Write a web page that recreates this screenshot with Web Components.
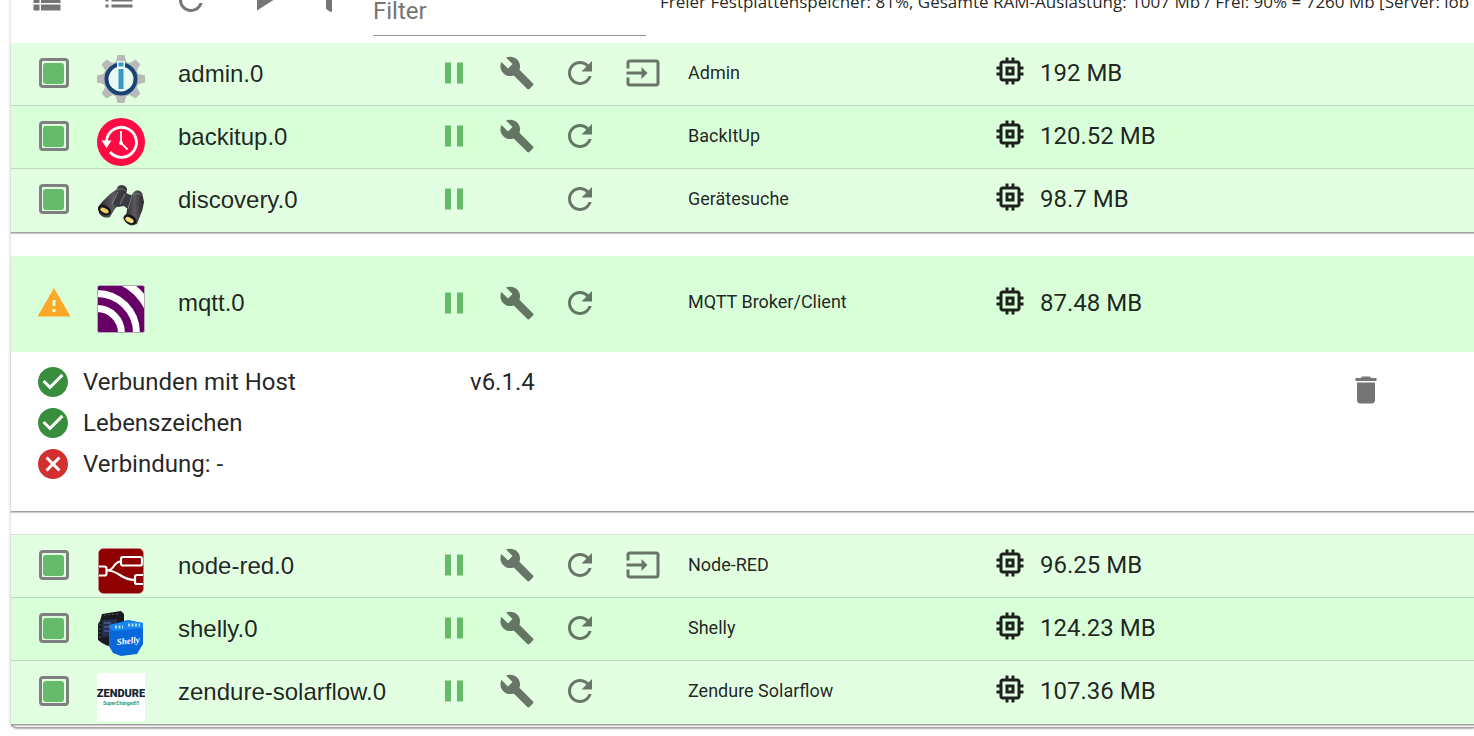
<!DOCTYPE html>
<html lang="de">
<head>
<meta charset="utf-8">
<title>Instanzen</title>
<style>
  body {
    display: flow-root;
    min-height: 100vh;
    margin: 0;
    overflow: hidden;
    background: #fff;
    color: rgba(0, 0, 0, 0.87);
    font-family: Roboto, "Liberation Sans", sans-serif;
    font-size: 24px;
    line-height: 36px;
  }
</style>
</head>
<body>
<instances-panel>
  <instances-toolbar slot="toolbar">Freier Festplattenspeicher: 81%, Gesamte RAM-Auslastung: 1007 Mb / Frei: 90% = 7260 Mb [Server: iob</instances-toolbar>

  <instance-group>
    <instance-row name="admin.0" logo="admin" memory="192 MB" actions="settings restart open">Admin</instance-row>
    <instance-row name="backitup.0" logo="backitup" memory="120.52 MB" actions="settings restart" shade>BackItUp</instance-row>
    <instance-row name="discovery.0" logo="discovery" memory="98.7 MB" actions="restart">Gerätesuche</instance-row>
  </instance-group>

  <instance-group>
    <instance-row name="mqtt.0" logo="mqtt" memory="87.48 MB" actions="settings restart" status="warning" shade expanded>MQTT Broker/Client</instance-row>
    <instance-details version="v6.1.4">
      <state-line state="ok">Verbunden mit Host</state-line>
      <state-line state="ok">Lebenszeichen</state-line>
      <state-line state="error">Verbindung: -</state-line>
    </instance-details>
  </instance-group>

  <instance-group divided>
    <instance-row name="node-red.0" logo="nodered" memory="96.25 MB" actions="settings restart open">Node-RED</instance-row>
    <instance-row name="shelly.0" logo="shelly" memory="124.23 MB" actions="settings restart" shade>Shelly</instance-row>
    <instance-row name="zendure-solarflow.0" logo="zendure" memory="107.36 MB" actions="settings restart">Zendure Solarflow</instance-row>
  </instance-group>
</instances-panel>

<script>
const ICONS = {
  viewList: 'M3 14h4v-4H3v4zm0 5h4v-4H3v4zM3 9h4V5H3v4zm5 5h13v-4H8v4zm0 5h13v-4H8v4zM8 5v4h13V5H8z',
  list: 'M3 13h2v-2H3v2zm0 4h2v-2H3v2zm0-8h2V7H3v2zm4 4h14v-2H7v2zm0 4h14v-2H7v2zM7 7v2h14V7H7z',
  restart: 'M17.65 6.35C16.2 4.9 14.21 4 12 4c-4.42 0-7.99 3.58-7.99 8s3.57 8 7.99 8c3.73 0 6.84-2.55 7.73-6h-2.08c-.82 2.33-3.04 4-5.65 4-3.31 0-6-2.69-6-6s2.69-6 6-6c1.66 0 3.14.69 4.22 1.78L13 11h7V4l-2.35 2.35z',
  play: 'M8 5v14l11-7z',
  pause: 'M6 19h4V5H6v14zm8-14v14h4V5h-4z',
  settings: 'M22.7 19l-9.1-9.1c.9-2.3.4-5-1.5-6.9-2-2-5-2.4-7.4-1.3L9 6 6 9 1.6 4.7C.4 7.1.9 10.1 2.9 12.1c1.9 1.9 4.6 2.4 6.9 1.5l9.1 9.1c.4.4 1 .4 1.4 0l2.3-2.3c.5-.4.5-1.1.1-1.4z',
  open: 'M21 3.01H3c-1.1 0-2 .9-2 2V9h2V4.99h18v14.03H3V15H1v4.01c0 1.1.9 1.98 2 1.98h18c1.1 0 2-.88 2-1.98v-14c0-1.11-.9-2-2-2zM11 16l4-4-4-4v3H1v2h10v3z',
  memory: 'M15 9H9v6h6V9zm-2 4h-2v-2h2v2zm8-2V9h-2V7c0-1.1-.9-2-2-2h-2V3h-2v2h-2V3H9v2H7c-1.1 0-2 .9-2 2v2H3v2h2v2H3v2h2v2c0 1.1.9 2 2 2h2v2h2v-2h2v2h2v-2h2c1.1 0 2-.9 2-2v-2h2v-2h-2v-2h2zm-4 6H7V7h10v10z',
  warning: 'M1 21h22L12 2 1 21zm12-3h-2v-2h2v2zm0-4h-2v-4h2v4z',
  ok: 'M12 2C6.48 2 2 6.48 2 12s4.48 10 10 10 10-4.48 10-10S17.52 2 12 2zm-2 15l-5-5 1.41-1.41L10 14.17l7.59-7.59L19 8l-9 9z',
  error: 'M12 2C6.47 2 2 6.47 2 12s4.47 10 10 10 10-4.47 10-10S17.53 2 12 2zm5 13.59L15.59 17 12 13.41 8.41 17 7 15.59 10.59 12 7 8.41 8.41 7 12 10.59 15.59 7 17 8.41 13.41 12 17 15.59z',
  remove: 'M6 19c0 1.1.9 2 2 2h8c1.1 0 2-.9 2-2V7H6v12zM19 4h-3.5l-1-1h-5l-1 1H5v2h14V4z'
};

const LOGOS = {
  admin: `
    <g fill="#b9b9b9">
      <circle cx="24" cy="24" r="18"/>
      ${[0, 45, 90, 135, 180, 225, 270, 315].map(a => `<path d="M20.500 0h7l2 8h-11z" transform="rotate(${a} 24 24)"/>`).join('')}
    </g>
    <circle cx="24" cy="24" r="14.500" fill="#e9fbf0" stroke="#174475" stroke-width="4"/>
    <path d="M20 6h8v8h-8z" fill="#e9fbf0"/>
    <path d="M21.500 7.500h5v4h-5zM21.500 14h5v20h-5z" fill="#3399cc"/>`,
  backitup: `
    <circle cx="24" cy="24" r="24" fill="#ff0a42"/>
    <path d="M9.500 23A15 15 0 1 1 13 34" fill="none" stroke="#fff" stroke-width="2.800"/>
    <path d="M4.500 22.500h10l-5 7.500z" fill="#fff"/>
    <path d="M24 13v12l6.500 6.500" fill="none" stroke="#fff" stroke-width="1.800"/>
    <circle cx="24" cy="25" r="2" fill="#fff"/>`,
  discovery: `
    <defs>
      <linearGradient id="body" x1="0" x2="1"><stop stop-color="#2a282c"/><stop offset=".5" stop-color="#5c5a60"/><stop offset="1" stop-color="#2a282c"/></linearGradient>
    </defs>
    <g transform="translate(0 1)">
      <path d="M20 7q0-4 5-4 5 1 5 5l-3 12-6 4q-3 2-5 6l-3 5Q6 37 2 31q-2-6 3-11l8-8z" fill="url(#body)"/>
      <path d="M36 11q3-4 7-2 3 2 3 6l1 5q-1 8-4 14l-3 8q-7 4-12-3l2-11 1-9z" fill="url(#body)"/>
      <path d="M20 9l9 2 7 3-4 14-5-4-6 1-5-3z" fill="#3c3b41"/>
      <path d="M21 10l-6 12M35 14l-4 13M28 12l-5 10" stroke="#85838a" fill="none"/>
      <path d="M20 8q5-3 9 1M36 13q5-3 10 1" stroke="#77767e" fill="none"/>
      <ellipse cx="7.500" cy="28" rx="7" ry="4.500" transform="rotate(28 7.500 28)" fill="#171519"/>
      <ellipse cx="7.500" cy="28.500" rx="4.500" ry="2.200" transform="rotate(28 7.500 28.500)" fill="#f0cf62"/>
      <ellipse cx="33" cy="37.500" rx="7" ry="4.500" transform="rotate(28 33 37.500)" fill="#171519"/>
      <ellipse cx="32.500" cy="38" rx="4.500" ry="2.400" transform="rotate(28 32.500 38)" fill="#f5dc83"/>
    </g>`,
  mqtt: `
    <clipPath id="tile"><rect x=".5" y=".5" width="47" height="47" rx="2"/></clipPath>
    <g clip-path="url(#tile)">
      <rect width="48" height="48" fill="#606"/>
      <g fill="none" stroke="#fff" stroke-width="7">
        <circle cx="0" cy="48" r="24.500"/>
        <circle cx="0" cy="48" r="39.500"/>
        <path d="M24-4Q42 4 52 24" stroke-width="8"/>
      </g>
    </g>
    <rect x=".5" y=".5" width="47" height="47" rx="2" fill="none" stroke="#b8a9b8"/>`,
  nodered: `
    <rect x="1.500" y="1.500" width="45" height="45" rx="5" fill="#8f0000" stroke="#c98888" stroke-width=".5"/>
    <g fill="none" stroke="#fff" stroke-width="2.200">
      <rect x="24" y="10" width="21" height="8.500" rx="2"/>
      <path d="M2 19.500h5.500q2 0 2 2v5q0 2-2 2H2M46 28h-6q-2 0-2 2v5q0 2 2 2h6"/>
      <path d="M10 23.500c8 0 6-9 14-9M10 23.500c13 0 13 9.500 28 9.500"/>
    </g>`,
  shelly: `
    <path d="M5 4L24 1l3 3v9l-3 19-13 4-6-3-4-3V14l2-3z" fill="#171b20"/>
    <path d="M5 10l15-1v16L5 27z" fill="#26304a"/>
    <path d="M7 5l16-1M3 14v14" stroke="#555b62" stroke-dasharray="2 2"/>
    <path d="M7 13h7M7 17h7M7 21h7" stroke="#5776b5"/>
    <path d="M12 15l19-5 15 3v21l-6 10-16 2-8-3-4-7z" fill="#0768dc"/>
    <path d="M12 15l19-4 15 2v5l-29 3-5-3z" fill="#1986ee"/>
    <path d="M18 17h8M31 15h12" stroke="#a8dcf5" stroke-width="3" stroke-dasharray="2 1.500"/>
    <text x="20" y="35" font-family="Liberation Serif, serif" font-size="9" font-style="italic" font-weight="700" fill="#fff" transform="rotate(-6 20 35)">Shelly</text>`,
  zendure: `
    <rect width="48" height="48" fill="#fff"/>
    <text x="24" y="24" text-anchor="middle" font-family="Roboto, sans-serif" font-size="11" font-weight="900" fill="#12222e">ZENDURE</text>
    <text x="24" y="32" text-anchor="middle" font-family="Roboto, sans-serif" font-size="5" font-weight="700" fill="#18a183">SuperCharged!!!</text>`
};

const LABELS = {
  settings: 'Einstellungen',
  restart: 'Neu starten',
  open: 'Instanz öffnen'
};

class MdIcon extends HTMLElement {
  constructor() {
    super();
    this.attachShadow({ mode: 'open' });
  }

  connectedCallback() {
    this.shadowRoot.innerHTML = `
      <style>
        :host { display: block; flex: none; width: 36px; height: 36px; }
        svg { display: block; width: 100%; height: 100%; fill: currentColor; }
      </style>
      <svg viewBox="0 0 24 24" aria-hidden="true"><path d="${ICONS[this.getAttribute('name')]}"/></svg>
    `;
  }
}

class AdapterLogo extends HTMLElement {
  constructor() {
    super();
    this.attachShadow({ mode: 'open' });
  }

  connectedCallback() {
    this.shadowRoot.innerHTML = `
      <style>
        :host { display: block; width: 48px; height: 48px; }
        svg { display: block; }
      </style>
      <svg width="48" height="48" viewBox="0 0 48 48" aria-hidden="true">${LOGOS[this.getAttribute('name')]}</svg>
    `;
  }
}

class InstancesPanel extends HTMLElement {
  constructor() {
    super();
    this.attachShadow({ mode: 'open' });
    // The panel sits half a toolbar above the window, as if scrolled
    this.shadowRoot.innerHTML = `
      <style>
        :host {
          display: block;
          margin: -43px 0 0 11px;
          padding-bottom: 3px;
          background: #fff;
          border-radius: 6px 0 0 6px;
          box-shadow: 0 1px 0 #a6a6a6, 0 2px 1px rgba(0, 0, 0, 0.2), 0 1px 4px rgba(0, 0, 0, 0.2);
        }
        .groups { display: flex; flex-direction: column; gap: 24px; }
      </style>
      <slot name="toolbar"></slot>
      <div class="groups"><slot></slot></div>
    `;
  }
}

class InstancesToolbar extends HTMLElement {
  constructor() {
    super();
    this.attachShadow({ mode: 'open' });
    this.shadowRoot.innerHTML = `
      <style>
        :host { display: flex; align-items: center; height: 86px; overflow: hidden; }
        button {
          display: flex;
          flex: none;
          align-items: center;
          justify-content: center;
          width: 72px;
          height: 54px;
          padding: 0;
          border: 0;
          background: none;
          color: #757575;
        }
        button.filter { width: 60px; }
        .filter svg { width: 24px; height: 24px; fill: currentColor; }
        input {
          flex: none;
          align-self: flex-end;
          box-sizing: border-box;
          width: 273px;
          height: 50px;
          margin: 0 14px 7px;
          padding: 0;
          border: 0;
          border-bottom: 1px solid #949494;
          background: none;
          outline: 0;
          font: inherit;
        }
        input::placeholder { color: #757575; opacity: 1; }
        .info {
          padding-top: 3px;
          font-family: "Open Sans", "Noto Sans", sans-serif;
          font-size: 17px;
          line-height: 24px;
          white-space: nowrap;
        }
      </style>
      <button aria-label="Tabelle"><md-icon name="viewList"></md-icon></button>
      <button aria-label="Liste"><md-icon name="list"></md-icon></button>
      <button aria-label="Aktualisieren"><md-icon name="restart"></md-icon></button>
      <button aria-label="Nur laufende"><md-icon name="play"></md-icon></button>
      <button class="filter" aria-label="Filtern">
        <svg viewBox="0 0 512 512"><path d="M487.976 0H24.028C2.710 0-8.047 25.866 7.058 40.971L192 225.941V432c0 7.831 3.821 15.170 10.237 19.662l80 55.980C298.020 518.690 320 507.493 320 487.980V225.941l184.947-184.970C520.021 25.896 509.338 0 487.976 0z"/></svg>
      </button>
      <input type="text" placeholder="Filter" aria-label="Filter">
      <div class="info"><slot></slot></div>
    `;
  }
}

class InstanceGroup extends HTMLElement {
  constructor() {
    super();
    this.attachShadow({ mode: 'open' });
    this.shadowRoot.innerHTML = `
      <style>
        :host {
          display: block;
          background: #fff;
          box-shadow: 0 1px 0 #a0a0a0, 0 2px 1px rgba(0, 0, 0, 0.2);
        }
        ::slotted(instance-row:not(:first-child)),
        :host([divided]) ::slotted(instance-row) {
          box-shadow: 0 -1px 0 #bdd9bd;
        }
        :host([divided]) ::slotted(instance-row:first-child) {
          box-shadow: 0 -1px 0 #dcdcdc;
        }
      </style>
      <slot></slot>
    `;
  }
}

class InstanceRow extends HTMLElement {
  constructor() {
    super();
    this.attachShadow({ mode: 'open' });
  }

  connectedCallback() {
    const name = this.getAttribute('name');
    const actions = this.getAttribute('actions').split(' ');
    const warning = this.getAttribute('status') === 'warning';

    this.shadowRoot.innerHTML = `
      <style>
        :host {
          display: grid;
          grid-template-columns: 58px 81px 249px 261px 304px 1fr;
          align-items: center;
          box-sizing: border-box;
          height: 63px;
          padding: 0 0 4px 28px;
          background: #e3ffe2;
        }
        :host([shade]) { background: #d8ffd8; }
        :host([expanded]) { height: 96px; padding-bottom: 2px; }
        .state {
          display: block;
          appearance: none;
          box-sizing: border-box;
          width: 30px;
          height: 30px;
          margin: 0;
          padding: 2px 1px;
          border: 3px solid #808080;
          border-radius: 4px;
        }
        .state::before {
          content: "";
          display: block;
          width: 21px;
          height: 21px;
          border-radius: 3px;
          background: #66bb6a;
        }
        .warning { margin-left: -3px; color: #ffa726; }
        adapter-logo { margin-top: 12px; }
        .name { padding-top: 2px; font-family: "Liberation Sans", Arial, sans-serif; white-space: nowrap; }
        .actions { display: grid; grid-template-columns: repeat(4, 54px); gap: 9px; }
        button {
          display: flex;
          align-items: center;
          justify-content: center;
          height: 54px;
          padding: 0;
          border: 0;
          background: none;
          color: rgba(0, 0, 0, 0.54);
        }
        .pause { grid-column: 1; color: #66bb6a; }
        .settings { grid-column: 2; }
        .restart { grid-column: 3; }
        .open { grid-column: 4; }
        .title { padding-bottom: 2px; font-size: 18px; line-height: 27px; }
        :host([expanded]) .name { padding-top: 0; }
        :host([expanded]) .title { padding-bottom: 4px; }
        .memory { display: flex; align-items: center; gap: 12px; white-space: nowrap; }
        .memory md-icon { margin-bottom: 4px; }
      </style>
      ${warning
        ? '<md-icon class="warning" name="warning"></md-icon>'
        : `<input class="state" type="checkbox" checked aria-label="${name} aktiv">`}
      <adapter-logo name="${this.getAttribute('logo')}"></adapter-logo>
      <div class="name">${name}</div>
      <div class="actions">
        <button class="pause" aria-label="Anhalten"><md-icon name="pause"></md-icon></button>
        ${actions.map(a => `<button class="${a}" aria-label="${LABELS[a]}"><md-icon name="${a}"></md-icon></button>`).join('')}
      </div>
      <div class="title"><slot></slot></div>
      <div class="memory"><md-icon name="memory"></md-icon><span>${this.getAttribute('memory')}</span></div>
    `;
  }
}

class InstanceDetails extends HTMLElement {
  constructor() {
    super();
    this.attachShadow({ mode: 'open' });
  }

  connectedCallback() {
    this.shadowRoot.innerHTML = `
      <style>
        :host {
          display: grid;
          grid-template-columns: 435px 1fr auto;
          align-items: start;
          padding: 12px 81px 29px 24px;
        }
        .states { display: flex; flex-direction: column; gap: 5px; }
        button {
          display: flex;
          align-items: center;
          justify-content: center;
          width: 54px;
          height: 52px;
          padding: 0;
          border: 0;
          background: none;
          color: #757575;
        }
      </style>
      <div class="states"><slot></slot></div>
      <div>${this.getAttribute('version')}</div>
      <button aria-label="Löschen"><md-icon name="remove"></md-icon></button>
    `;
  }
}

class StateLine extends HTMLElement {
  constructor() {
    super();
    this.attachShadow({ mode: 'open' });
  }

  connectedCallback() {
    this.shadowRoot.innerHTML = `
      <style>
        :host { display: flex; align-items: center; gap: 12px; }
        md-icon { color: #388e3c; }
        :host([state="error"]) md-icon { color: #d32f2f; }
      </style>
      <md-icon name="${this.getAttribute('state')}"></md-icon>
      <span><slot></slot></span>
    `;
  }
}

customElements.define('md-icon', MdIcon);
customElements.define('adapter-logo', AdapterLogo);
customElements.define('instances-panel', InstancesPanel);
customElements.define('instances-toolbar', InstancesToolbar);
customElements.define('instance-group', InstanceGroup);
customElements.define('instance-row', InstanceRow);
customElements.define('instance-details', InstanceDetails);
customElements.define('state-line', StateLine);
</script>
</body>
</html>
